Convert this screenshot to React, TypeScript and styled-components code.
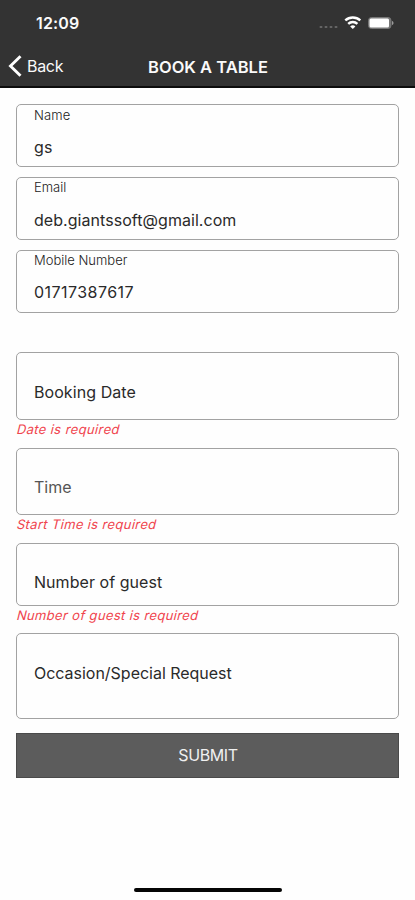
import React from "react";
import styled, { createGlobalStyle } from "styled-components";

const GlobalStyle = createGlobalStyle`
  * { box-sizing: border-box; }
  body { margin: 0; background: #fefefe; }
`;

const Screen = styled.div`
  width: 415px;
  height: 900px;
  display: flex;
  flex-direction: column;
  background: #fefefe;
  font-family: Inter, "Liberation Sans", sans-serif;
  overflow: hidden;
`;

const Header = styled.header`
  height: 88px;
  flex: none;
  background: #333333;
  border-bottom: 2px solid #0c0c0c;
  color: #fafafa;
`;

const StatusBar = styled.div`
  height: 46px;
  padding: 0 20px 0 36px;
  display: flex;
  align-items: center;
  justify-content: space-between;
`;

const Clock = styled.span`
  font-size: 16px;
  font-weight: 600;
  letter-spacing: 0.15px;
`;

const NavBar = styled.nav`
  height: 40px;
  padding: 0 8px;
  display: grid;
  grid-template-columns: 100px 1fr 100px;
  align-items: center;
`;

const BackButton = styled.a`
  display: flex;
  align-items: center;
  gap: 4px;
  font-size: 16px;
  letter-spacing: -0.3px;
`;

const Title = styled.h1`
  margin: 2px 0 0 1px;
  text-align: center;
  font-size: 16.5px;
  line-height: 20px;
  font-weight: 600;
  white-space: nowrap;
  letter-spacing: 0;
`;

const Form = styled.main`
  padding: 16px 16px 0;
  display: flex;
  flex-direction: column;
`;

const Group = styled.div<{ $height: number }>`
  height: ${(p) => p.$height}px;
  flex: none;
`;

const Box = styled.div<{ $height: number }>`
  height: ${(p) => p.$height}px;
  padding: 0 17px;
  border: 1px solid #a2a2a2;
  border-radius: 5px;
`;

const Label = styled.div<{ $spacing: number; $height: number }>`
  height: ${(p) => p.$height}px;
  line-height: ${(p) => p.$height}px;
  font-size: 13px;
  font-weight: 300;
  color: #222;
  letter-spacing: ${(p) => p.$spacing}px;
`;

const Value = styled.div<{ $spacing: number; $top: number; $color?: string }>`
  padding-top: ${(p) => p.$top}px;
  line-height: 22px;
  font-size: 16px;
  color: ${(p) => p.$color ?? "#2a2a2a"};
  letter-spacing: ${(p) => p.$spacing}px;
  white-space: nowrap;
`;

const ErrorText = styled.div<{ $spacing: number }>`
  width: max-content;
  height: 19px;
  padding-left: 1px;
  line-height: 19px;
  font-size: 13px;
  color: #f0444d;
  letter-spacing: ${(p) => p.$spacing}px;
  white-space: nowrap;
  transform: skewX(-14deg);
`;

const SubmitButton = styled.button`
  height: 45px;
  border: 1px solid #4a4a4a;
  padding: 0 0 1px 1px;
  background: #5c5c5c;
  color: #f0f0f0;
  font: 400 16px/20px Inter, "Liberation Sans", sans-serif;
  letter-spacing: -0.4px;
`;

const HomeIndicator = styled.div`
  width: 148px;
  height: 4px;
  margin: auto auto 8px;
  border-radius: 3px;
  background: #050505;
`;

const StatusIcons = () => (
  <svg width="76" height="20" viewBox="0 0 76 20">
    <g fill="#666">
      <rect x="0.5" y="13" width="3" height="2" rx="1" />
      <rect x="5.5" y="13" width="3" height="2" rx="1" />
      <rect x="10.5" y="13" width="3" height="2" rx="1" />
      <rect x="15.5" y="13" width="3" height="2" rx="1" />
    </g>
    <g fill="none" stroke="#fff" strokeWidth="2.4">
      <path d="M26.3 7.4a11 11 0 0 1 15 0" />
      <path d="M29.2 10.9a6.6 6.6 0 0 1 9.2 0" />
    </g>
    <path d="M33.8 16 31.2 13.5a3.8 3.8 0 0 1 5.2 0z" fill="#fff" />
    <rect x="49.5" y="4.5" width="22.5" height="11" rx="3" fill="#777" stroke="#777" />
    <rect x="50.5" y="5.5" width="19.5" height="9" rx="1.5" fill="#fff" />
    <path d="M73 8c2 .7 2 3.4 0 4z" fill="#999" />
  </svg>
);

const BackChevron = () => (
  <svg width="15" height="24" viewBox="0 0 15 24">
    <path d="M12.5 2.3 2.5 12l10 9.7" fill="none" stroke="#fff" strokeWidth="2.9" />
  </svg>
);

interface FieldData {
  label?: string;
  labelSpacing?: number;
  labelHeight?: number;
  value: string;
  spacing: number;
  top: number;
  box: number;
  group: number;
  color?: string;
  error?: string;
  errorSpacing?: number;
}

const fields: FieldData[] = [
  { label: "Name", labelSpacing: 0.1, labelHeight: 21, value: "gs", spacing: 0.2, top: 10, box: 63, group: 73 },
  { label: "Email", labelSpacing: 0, labelHeight: 19, value: "deb.giantssoft@gmail.com", spacing: 0.05, top: 12, box: 63, group: 73 },
  { label: "Mobile Number", labelSpacing: 0, labelHeight: 19, value: "01717387617", spacing: 0.45, top: 11, box: 63, group: 102 },
  { value: "Booking Date", spacing: 0.07, top: 28, box: 68, group: 96, error: "Date is required", errorSpacing: 0.38 },
  { value: "Time", spacing: 0, top: 27, box: 67, group: 95, color: "#555", error: "Start Time is required", errorSpacing: 0.35 },
  { value: "Number of guest", spacing: 0.05, top: 27, box: 63, group: 90, error: "Number of guest is required", errorSpacing: 0.35 },
  { value: "Occasion/Special Request", spacing: -0.02, top: 28, box: 86, group: 100 },
];

export default function App() {
  return (
    <Screen>
      <GlobalStyle />
      <Header>
        <StatusBar>
          <Clock>12:09</Clock>
          <StatusIcons />
        </StatusBar>
        <NavBar>
          <BackButton>
            <BackChevron />
            Back
          </BackButton>
          <Title>BOOK A TABLE</Title>
        </NavBar>
      </Header>
      <Form>
        {fields.map((f) => (
          <Group key={f.value} $height={f.group}>
            <Box $height={f.box}>
              {f.label && (
                <Label $spacing={f.labelSpacing ?? 0} $height={f.labelHeight ?? 21}>
                  {f.label}
                </Label>
              )}
              <Value $spacing={f.spacing} $top={f.top} $color={f.color}>
                {f.value}
              </Value>
            </Box>
            {f.error && <ErrorText $spacing={f.errorSpacing ?? 0}>{f.error}</ErrorText>}
          </Group>
        ))}
        <SubmitButton>SUBMIT</SubmitButton>
      </Form>
      <HomeIndicator />
    </Screen>
  );
}
